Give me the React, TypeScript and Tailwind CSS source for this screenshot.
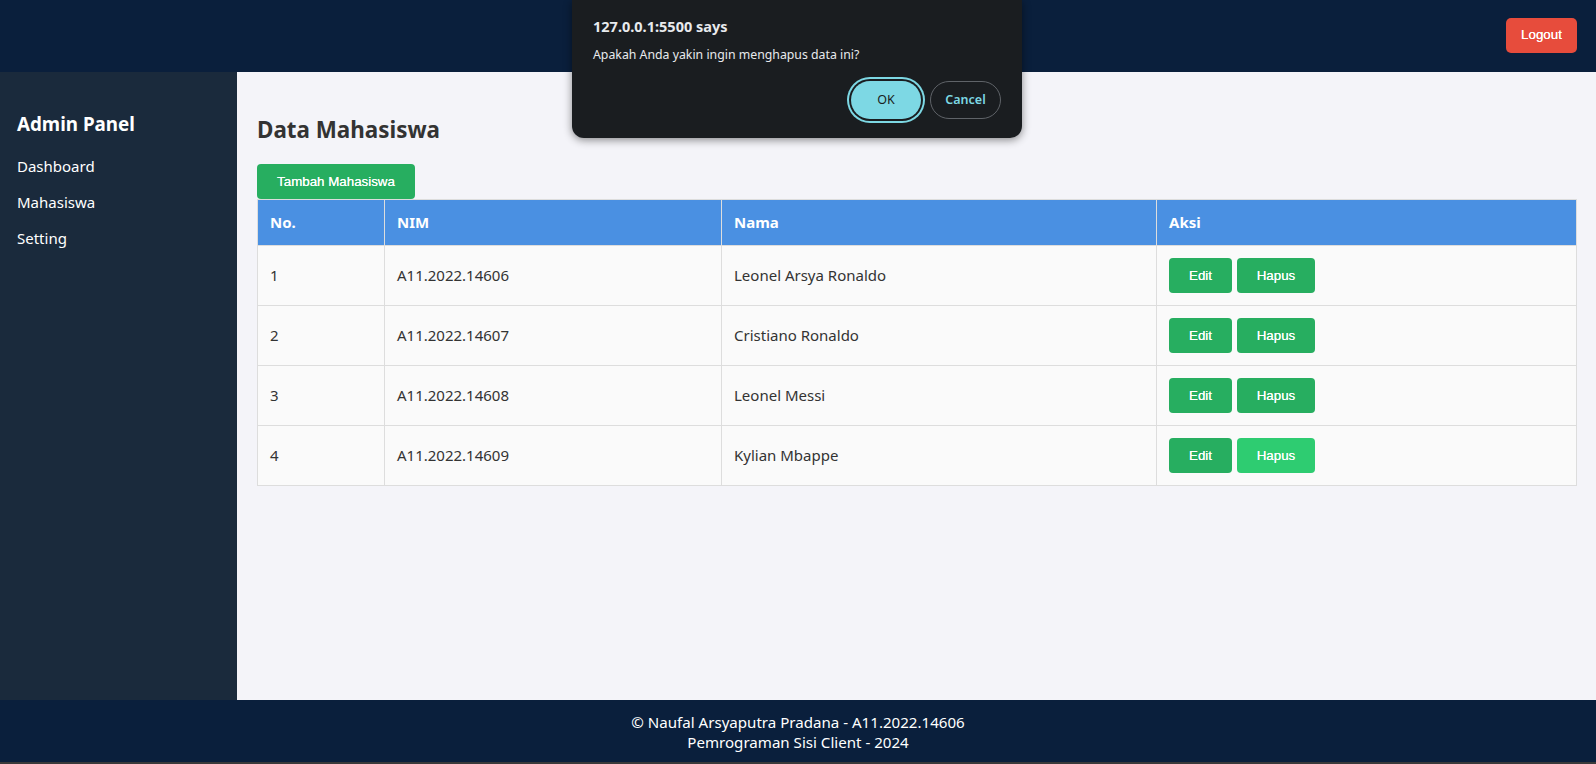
import React from "react";

const students = [
  { no: 1, nim: "A11.2022.14606", nama: "Leonel Arsya Ronaldo" },
  { no: 2, nim: "A11.2022.14607", nama: "Cristiano Ronaldo" },
  { no: 3, nim: "A11.2022.14608", nama: "Leonel Messi" },
  { no: 4, nim: "A11.2022.14609", nama: "Kylian Mbappe" },
];

const btnFont = "font-['Liberation_Sans',Arial,sans-serif] text-[13.33px] [text-shadow:0_0_0.5px_#fff]";

export default function App() {
  return (
    <div className="relative flex h-[764px] flex-col overflow-hidden font-['Noto_Sans',sans-serif] text-[#333]">
      {/* Header */}
      <header className="flex h-[72px] shrink-0 items-center justify-end bg-[#0a1f3c] pb-[2px] pr-[19px]">
        <button className={`h-[35px] w-[71px] rounded-[5px] bg-[#e74c3c] text-white ${btnFont}`}>
          Logout
        </button>
      </header>

      <div className="flex flex-1">
        {/* Sidebar */}
        <aside className="w-[237px] shrink-0 bg-[#1a2a3c] px-[17px] pt-[38px] text-white">
          <h2 className="mb-[10px] text-[18.8px] font-bold leading-[28px]">Admin Panel</h2>
          <ul className="text-[15px]">
            <li className="leading-[36px]">Dashboard</li>
            <li className="leading-[36px]">Mahasiswa</li>
            <li className="leading-[36px]">Setting</li>
          </ul>
        </aside>

        {/* Main */}
        <main className="flex-1 bg-[#f4f4f9] pl-[20px] pr-[19px] pt-[42px]">
          <h1 className="mb-[18px] text-[22.4px] font-bold leading-[32px] text-[#333]">Data Mahasiswa</h1>
          <button className={`h-[35px] w-[158px] rounded-[4px] bg-[#27ae60] text-white ${btnFont}`}>
            Tambah Mahasiswa
          </button>
          <table className="w-full table-fixed border-collapse text-[15px]">
            <colgroup>
              <col className="w-[127px]" />
              <col className="w-[337px]" />
              <col className="w-[435px]" />
              <col />
            </colgroup>
            <thead>
              <tr className="bg-[#4a90e2] text-left text-white">
                <th className="border border-[#ddd] px-[12px] py-[12px] font-bold leading-[21px]">No.</th>
                <th className="border border-[#ddd] px-[12px] py-[12px] font-bold leading-[21px]">NIM</th>
                <th className="border border-[#ddd] px-[12px] py-[12px] font-bold leading-[21px]">Nama</th>
                <th className="border border-[#ddd] px-[12px] py-[12px] font-bold leading-[21px]">Aksi</th>
              </tr>
            </thead>
            <tbody>
              {students.map((s) => (
                <tr key={s.no} className="bg-[#fafafa]">
                  <td className="border border-[#ddd] px-[12px] py-[12px]">{s.no}</td>
                  <td className="border border-[#ddd] px-[12px] py-[12px]">{s.nim}</td>
                  <td className="border border-[#ddd] px-[12px] py-[12px]">{s.nama}</td>
                  <td className="border border-[#ddd] px-[12px] py-[12px]">
                    <div className="flex gap-[5px]">
                      <button className={`h-[35px] w-[63px] rounded-[4px] bg-[#27ae60] text-white ${btnFont}`}>
                        Edit
                      </button>
                      <button
                        className={`h-[35px] w-[78px] rounded-[4px] text-white ${btnFont} ${
                          s.no === 4 ? "bg-[#2ecc71]" : "bg-[#27ae60]"
                        }`}
                      >
                        Hapus
                      </button>
                    </div>
                  </td>
                </tr>
              ))}
            </tbody>
          </table>
        </main>
      </div>

      {/* Footer */}
      <footer className="h-[64px] shrink-0 border-b-2 border-[#3a3a3a] bg-[#0a1f3c] pb-[10px] pt-[12px] text-center text-[15.1px] leading-[20px] text-white">
        <p>© Naufal Arsyaputra Pradana - A11.2022.14606</p>
        <p>Pemrograman Sisi Client - 2024</p>
      </footer>

      {/* Browser confirm dialog */}
      <div className="absolute left-[572px] top-0 h-[138px] w-[450px] rounded-b-[12px] bg-[#1a1d20] px-[21px] shadow-[0_2px_8px_rgba(0,0,0,0.45)]">
        <p className="pt-[15px] text-[14.5px] font-bold leading-[22px] text-[#e8eaed]">127.0.0.1:5500 says</p>
        <p className="mt-[9px] text-[12.3px] leading-[18px] text-[#e8eaed]">Apakah Anda yakin ingin menghapus data ini?</p>
        <div className="mt-[17px] flex justify-end gap-[9px]">
          <button className="h-[38px] w-[70px] rounded-full bg-[#7dd8e4] text-[12.5px] text-[#1a1d20] shadow-[0_0_0_2px_#1a1d20,0_0_0_4px_#7dd8e4]">
            OK
          </button>
          <button className="h-[38px] w-[71px] rounded-full border border-[#5f6368] text-[12.5px] font-semibold text-[#7dd8e4]">
            Cancel
          </button>
        </div>
      </div>
    </div>
  );
}
